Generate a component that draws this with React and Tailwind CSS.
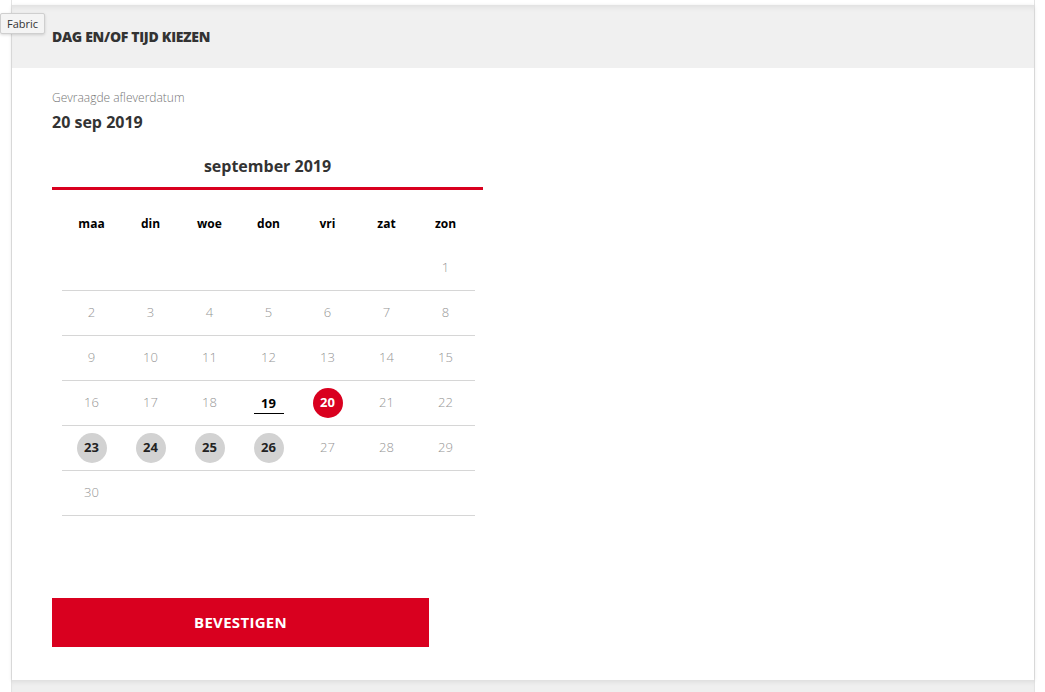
import React, { useState } from 'react';

const DAYS = ['maa', 'din', 'woe', 'don', 'vri', 'zat', 'zon'];
const AVAILABLE = [23, 24, 25, 26];
const TODAY = 19;

const buildWeeks = () => {
  // september 2019 begint op zondag
  const cells = [null, null, null, null, null, null];
  for (let d = 1; d <= 30; d++) cells.push(d);
  while (cells.length % 7) cells.push(null);
  const weeks = [];
  for (let i = 0; i < cells.length; i += 7) weeks.push(cells.slice(i, i + 7));
  return weeks;
};

const DayCell = ({ day, selected, onSelect }) => {
  if (!day) return <div />;

  if (day === selected) {
    return (
      <div className="flex items-center justify-center">
        <span className="flex h-[30px] w-[30px] items-center justify-center rounded-full bg-[#d9001f] text-[13px] font-bold text-white">
          {day}
        </span>
      </div>
    );
  }

  if (AVAILABLE.includes(day)) {
    return (
      <div className="flex items-center justify-center">
        <button
          onClick={() => onSelect(day)}
          className="flex h-[30px] w-[30px] items-center justify-center rounded-full bg-[#d2d2d2] text-[13px] font-bold text-[#222]"
        >
          {day}
        </button>
      </div>
    );
  }

  if (day === TODAY) {
    return (
      <div className="flex items-center justify-center">
        <span className="w-[30px] border-b border-black pb-[2px] pt-[3px] text-center text-[13px] font-bold leading-[16px] text-black">
          {day}
        </span>
      </div>
    );
  }

  return (
    <div className="flex items-center justify-center text-[13px] font-light text-[#959595]">
      {day}
    </div>
  );
};

const App = () => {
  const [selected, setSelected] = useState(20);
  const weeks = buildWeeks();

  return (
    <div className="relative min-h-[692px] bg-white font-['Open_Sans','Liberation_Sans',sans-serif] text-[#333]">
      {/* tooltip */}
      <div className="absolute left-0 top-[13px] z-10 rounded-[2px] border border-[#cfcfcf] bg-[#f4f4f4] px-[6px] py-[2px] text-[11px] leading-[15px] text-[#333] shadow-[0_1px_3px_rgba(0,0,0,0.15)]">
        Fabric
      </div>

      <div className="ml-[11px] w-[1024px] border-x border-[#e3e3e3] pt-[5px]">
        <div className="bg-white shadow-[0_1px_4px_rgba(0,0,0,0.12)]">
          {/* header */}
          <div className="flex h-[63px] items-center bg-[#f0f0f0] px-[40px] shadow-[inset_0_6px_6px_-4px_rgba(0,0,0,0.08)]">
            <h2 className="text-[14px] font-extrabold uppercase tracking-[-0.3px] text-[#333]">
              Dag en/of tijd kiezen
            </h2>
          </div>

          {/* body */}
          <div className="px-[40px] pb-[33px] pt-[22px]">
            <p className="text-[12px] font-light leading-[16px] text-[#777]">Gevraagde afleverdatum</p>
            <p className="mt-[5px] text-[16px] font-bold leading-[22px] text-[#333]">
              {selected} sep 2019
            </p>

            <div className="mt-[22px] w-[431px]">
              <div className="border-b-[3px] border-[#d9001f] pb-[10px] text-center text-[16px] font-bold leading-[22px] text-[#333]">
                september 2019
              </div>

              <div className="pl-[10px] pr-[8px]">
                <div className="mt-[12px] grid h-[44px] grid-cols-7 items-center">
                  {DAYS.map((d) => (
                    <div key={d} className="text-center text-[12px] font-bold text-black">
                      {d}
                    </div>
                  ))}
                </div>

                {weeks.map((week, i) => (
                  <div key={i} className="grid h-[45px] grid-cols-7 border-b border-[#d6d6d6]">
                    {week.map((day, j) => (
                      <DayCell key={j} day={day} selected={selected} onSelect={setSelected} />
                    ))}
                  </div>
                ))}
              </div>
            </div>

            <button className="mt-[82px] flex h-[49px] w-[377px] items-center justify-center bg-[#d9001f] text-[15px] font-bold tracking-[0.3px] text-white">
              BEVESTIGEN
            </button>
          </div>
        </div>

        {/* volgende sectie */}
        <div className="h-[40px] bg-[#efefef] shadow-[inset_0_5px_5px_-3px_rgba(0,0,0,0.08)]" />
      </div>
    </div>
  );
};

export default App;
